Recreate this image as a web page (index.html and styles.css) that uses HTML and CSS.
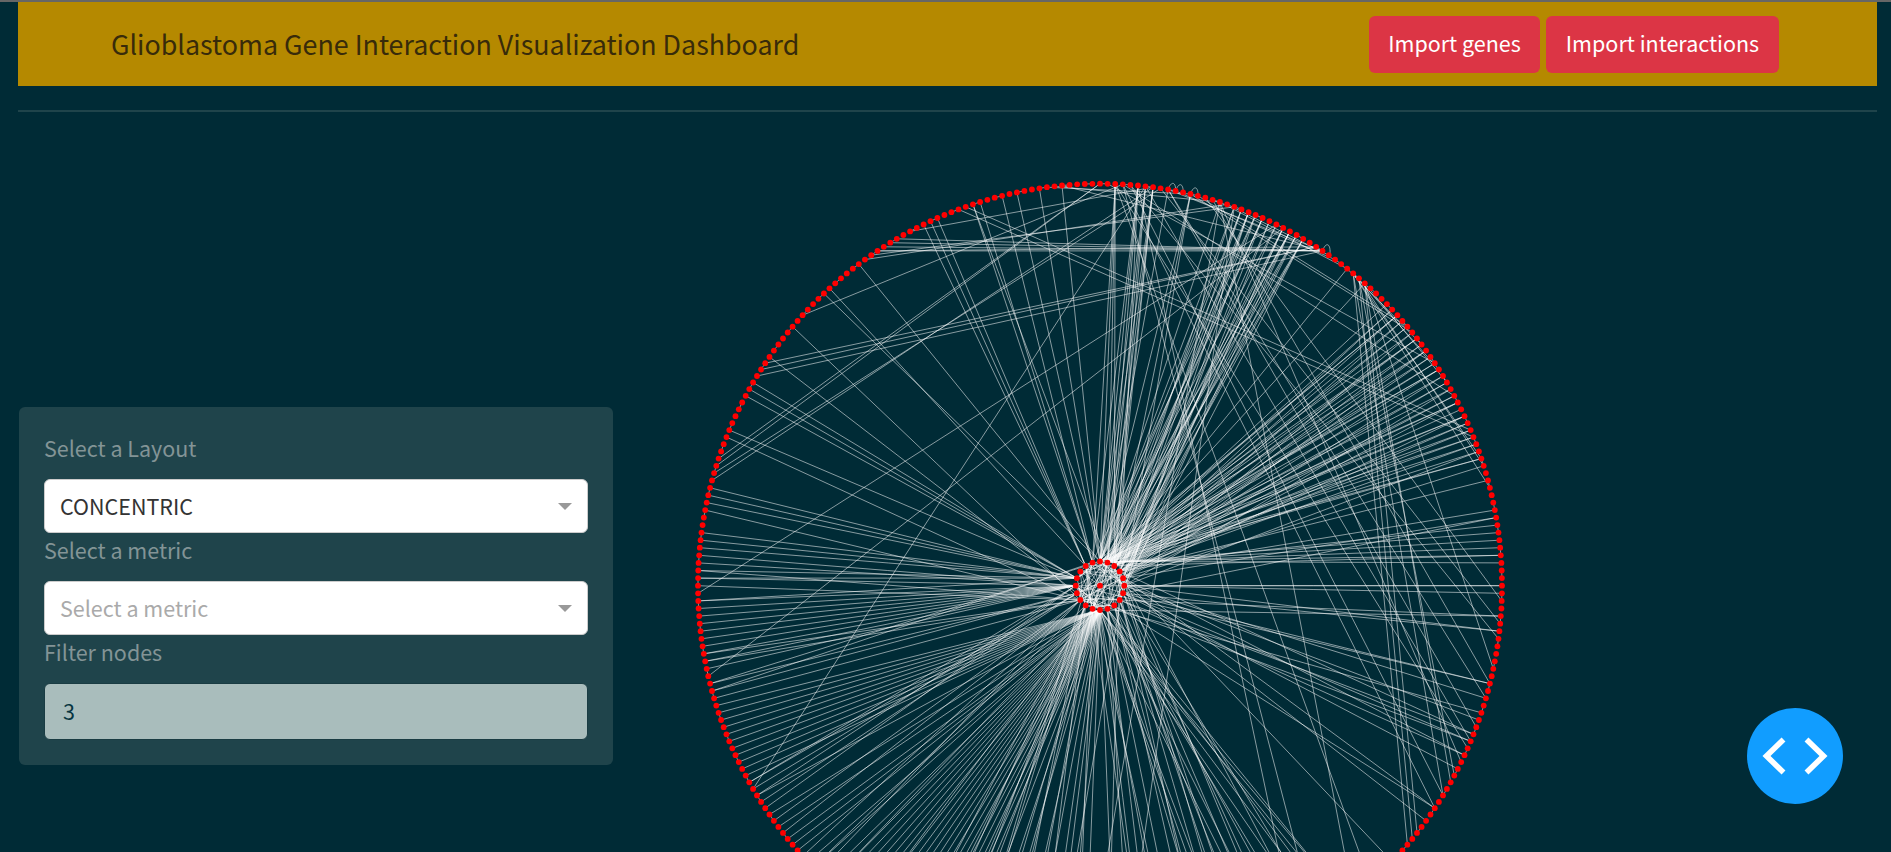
FILE: index.html
```html
<!DOCTYPE html>
<html lang="en">
<head>
<meta charset="utf-8">
<title>Glioblastoma Gene Interaction Visualization Dashboard</title>
<link rel="stylesheet" href="styles.css">
</head>
<body>
<header class="navbar">
  <h1 class="brand">Glioblastoma Gene Interaction Visualization Dashboard</h1>
  <div class="actions">
    <button class="btn genes">Import genes</button>
    <button class="btn interactions">Import interactions</button>
  </div>
</header>
<hr class="rule">
<main class="content">
  <section class="card">
    <div class="label">Select a Layout</div>
    <div class="select"><span>CONCENTRIC</span><i class="arrow"></i></div>
    <div class="label">Select a metric</div>
    <div class="select placeholder"><span>Select a metric</span><i class="arrow"></i></div>
    <div class="label">Filter nodes</div>
    <div class="input">3</div>
  </section>
  <svg class="graph" id="graph" viewBox="613 112 1264 740"></svg>
</main>
<button class="debug" aria-label="Debug menu">
  <svg viewBox="0 0 96 96" width="96" height="96"><path d="M36.5 31.5 19.5 48 36.5 64.5M59.5 31.5 76.5 48 59.5 64.5" fill="none" stroke="#fff" stroke-width="5.6"/></svg>
</button>
<script src="graph.js"></script>
</body>
</html>
```
FILE: styles.css
```css
* { box-sizing: border-box; }
html, body { height: 100%; }
body {
  margin: 0;
  padding: 0 14px 0 18px;
  overflow: hidden;
  border-top: 2px solid #666;
  background: #002b36;
  font-family: "Noto Sans CJK SC", "Noto Sans", sans-serif;
  font-size: 21.5px;
  display: flex;
  flex-direction: column;
}
button { font: inherit; border: 0; padding: 0; }
.navbar {
  height: 84px;
  flex: none;
  padding: 0 98px 0 93px;
  background: #b58900;
  display: flex;
  align-items: center;
  justify-content: space-between;
}
.brand { margin: 0; font-size: 26.85px; font-weight: 400; line-height: 40px; color: #382b0a; white-space: nowrap; }
.actions { display: flex; gap: 6px; }
.btn { height: 57px; padding-bottom: 3px; border-radius: 6px; background: #dc3545; color: #fff; white-space: nowrap; }
.genes { width: 171px; }
.interactions { width: 233px; }
.rule { width: 100%; height: 2px; flex: none; margin: 24px 0 0; border: 0; background: #1f444b; }
.content { flex: 1; min-height: 0; display: flex; }
.card {
  flex: none;
  width: 594px;
  height: 358px;
  margin: 295px 0 0 1px;
  padding: 24px 25px;
  border-radius: 6px;
  background: #1f444b;
  color: #839496;
}
.label { height: 48px; line-height: 34px; }
.select {
  height: 54px;
  padding: 0 15px;
  border: 1px solid #ccc;
  border-radius: 6px;
  background: #fff;
  color: #333;
  display: flex;
  align-items: center;
  justify-content: space-between;
}
.select span { padding-bottom: 2px; }
.placeholder { color: #aaa; }
.arrow { border: 7.5px solid transparent; border-top-color: #999; border-bottom: 0; }
.input {
  height: 57px;
  border: 1px solid #1a3c43;
  border-radius: 6px;
  padding: 0 18px;
  line-height: 53px;
  background: #a9bdbc;
  color: #073642;
}
.graph { flex: none; width: 1264px; height: 740px; }
.edges { fill: none; stroke: #fff; stroke-width: 1; stroke-opacity: .53; }
.nodes { fill: #f00; }
.debug {
  position: absolute;
  right: 48px;
  bottom: 48px;
  width: 96px;
  height: 96px;
  border-radius: 50%;
  background: #119dff;
}
.debug svg { display: block; }
```
FILE: graph.js
```js
// Concentric layout: ids 0-331 sit on the outer ring (clockwise from the top),
// 400-419 on the inner ring, 420 in the centre.
const CX = 1100, CY = 585.7;
function pos(id) {
  if (id === 420) return [CX, CY];
  const inner = id >= 400;
  const a = inner ? (id - 400) * Math.PI / 10 : id * Math.PI / 166;
  const r = inner ? 24.3 : 402;
  return [CX + r * Math.sin(a), CY - r * Math.cos(a)];
}
// hub on the inner ring -> its neighbours
const hubs = {
  416: [262, 261, 260, 270, 275, 276, 277, 256, 255, 254, 251, 44, 48, 53, 250, 247],
  415: [253, 252, 250, 247, 246, 245, 244, 243, 242, 241, 240, 239, 238, 96, 222, 220, 218],
  413: [259, 269, 286, 249, 234, 251, 240, 239, 27, 58, 216, 214, 210, 207, 100],
  414: [281, 222, 221, 219, 236, 235, 61, 104],
  418: [293, 308, 309, 310, 236, 156, 160],
  419: [315, 316, 319, 235, 2, 5, 151, 21, 183, 178],
  400: [292, 298, 321, 324, 327, 2, 5, 6, 7, 9, 12, 16, 18, 19, 20, 22, 24, 26, 80, 79, 44, 47, 50, 53, 58, 60, 63, 66],
  401: [2, 5, 6, 7, 19, 21, 22, 25, 26, 28, 35, 38, 42, 43, 45, 46, 48, 49, 51, 52, 54, 56, 58, 60, 62, 64, 66, 78, 77, 76, 181, 172, 315],
  402: [2, 6, 7, 12, 18, 20, 23, 25, 27, 43, 44, 46, 48, 50, 52, 55, 57, 59, 61, 63, 65, 75, 79, 146, 152],
  403: [5, 19, 20, 24, 26, 28, 45, 49, 51, 53, 55, 57, 62, 64, 73, 69, 103, 137, 142, 165],
  404: [22, 25, 27, 47, 50, 54, 60, 67, 74, 106, 114, 123, 148],
  405: [83, 83, 84, 89, 98, 101, 116, 56, 65, 28],
  406: [89, 96, 104, 108, 74, 135, 141, 20],
  407: [87, 103, 106, 143, 149, 147, 21, 26],
  408: [153, 145, 151, 139, 23, 114],
  409: [131, 133, 138, 142, 159, 155, 162, 7, 25],
  410: [131, 132, 134, 136, 143, 148, 149, 157, 160, 164, 87,
    233, 232, 231, 230, 229, 228, 227, 226, 225, 224, 223, 220, 217, 215, 213, 212, 211, 209, 208, 206, 205, 204,
    203, 202, 201, 200, 199, 198, 197, 196, 195, 194, 193, 192, 191, 190, 189, 188, 187, 186, 184, 182, 180, 177, 175, 173, 170, 168],
  411: [190, 187, 185, 179, 176, 169, 199, 205, 28],
  412: [192, 189, 186, 183, 174, 208, 22, 26]
};
const chords = [
  [248, 24], [237, 25], [221, 6], [288, 3], [280, 30], [279, 30], [278, 31],
  [266, 0], [265, 0], [264, 8], [263, 7], [304, 31], [303, 31], [302, 31], [301, 30], [301, 31], [300, 18], [299, 17],
  [306, 7], [313, 63], [314, 62], [327, 31], [326, 16], [325, 12],
  [3, 114], [4, 112], [9, 102], [15, 96], [14, 85], [8, 88], [38, 94], [9, 98], [16, 130], [2, 127], [5, 139], [3, 136],
  [18, 163], [16, 168], [12, 172], [3, 57], [1, 52], [12, 47], [13, 46], [10, 33], [9, 31],
  [36, 66], [37, 67], [36, 53], [38, 55], [36, 70], [35, 49], [36, 120], [37, 119], [38, 118], [38, 110], [37, 109], [36, 112],
  [16, 107], [2, 105], [6, 104], [4, 90], [32, 17], [35, 16]
];
const loops = [9, 10, 12, 31];

let d = '';
const line = (a, b, bow) => {
  const [x1, y1] = pos(a), [x2, y2] = pos(b);
  const len = Math.hypot(x2 - x1, y2 - y1) || 1;
  const mx = (x1 + x2) / 2 + bow * (y1 - y2) / len, my = (y1 + y2) / 2 + bow * (x2 - x1) / len;
  d += `M${x1.toFixed(1)} ${y1.toFixed(1)}Q${mx.toFixed(1)} ${my.toFixed(1)} ${x2.toFixed(1)} ${y2.toFixed(1)}`;
};
let markup = '';
const flush = () => { markup += `<path d="${d}"/>`; d = ''; };
for (const hub in hubs) for (const n of hubs[hub]) { line(+hub, n, 0); flush(); }
for (const [a, b] of chords) { line(a, b, 0); flush(); }
for (let i = 0; i < 20; i++) {
  line(400 + i, 400 + (i * 7 + 5) % 20, 2); flush();
  line(400 + i, 400 + (i * 3 + 8) % 20, -2); flush();
  line(400 + i, 400 + (i + 3 + i % 4) % 20, 3); flush();
  if (i % 3 !== 1) { line(400 + i, 420, 0); flush(); }
}
for (let i = 0; i < 332; i += 3) { line(i, (i + 1) % 332, 0); flush(); }
for (const n of loops) {
  const [x, y] = pos(n);
  d += `M${x} ${y}C${x + 3} ${y - 9} ${x + 8} ${y - 8} ${x + 7.5} ${y + 2}`;
  flush();
}
let dots = '';
const ids = [...Array(332).keys(), ...Array.from({ length: 21 }, (_, i) => 400 + i)];
for (const id of ids) {
  const [x, y] = pos(id);
  dots += `<circle cx="${x.toFixed(1)}" cy="${y.toFixed(1)}" r="2.9"/>`;
}
document.getElementById('graph').innerHTML = `<g class="edges">${markup}</g><g class="nodes">${dots}</g>`;
```
